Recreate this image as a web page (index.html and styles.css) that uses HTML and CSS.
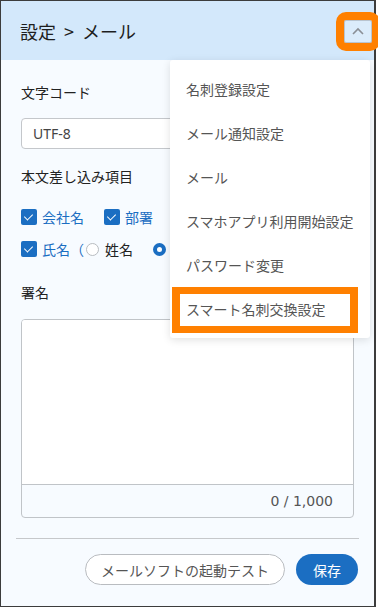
FILE: index.html
```html
<!DOCTYPE html>
<html lang="ja">
<head>
    <meta charset="UTF-8">
    <meta name="viewport" content="width=device-width, initial-scale=1.0">
    <title>設定 - メール</title>
    <link rel="stylesheet" href="styles.css">
</head>
<body>
    <div class="panel">
        <div class="header">
            <h1>設定 &gt; メール</h1>
            <button class="toggle" type="button">
                <svg width="12" height="8" viewBox="0 0 12 8"><polyline points="1,7 6,2 11,7" fill="none" stroke="#8a8f96" stroke-width="1.6"/></svg>
            </button>
        </div>

        <div class="content">
            <div class="label first">文字コード</div>
            <div class="select">UTF-8</div>

            <div class="label second">本文差し込み項目</div>
            <div class="checks row1">
                <span class="check"><span class="box"></span>会社名</span>
                <span class="check"><span class="box"></span>部署</span>
            </div>
            <div class="checks row2">
                <span class="check"><span class="box"></span>氏名（</span>
                <span class="radio"><span class="dot"></span>姓名</span>
                <span class="radio"><span class="dot on"></span></span>
            </div>

            <div class="label third">署名</div>
            <div class="textarea">
                <div class="text"></div>
                <div class="counter">0 / 1,000</div>
            </div>
        </div>

        <div class="footer">
            <button class="btn outline" type="button">メールソフトの起動テスト</button>
            <button class="btn primary" type="button">保存</button>
        </div>

        <!-- ドロップダウンメニュー -->
        <div class="menu">
            <a href="#">名刺登録設定</a>
            <a href="#">メール通知設定</a>
            <a href="#">メール</a>
            <a href="#">スマホアプリ利用開始設定</a>
            <a href="#">パスワード変更</a>
            <a href="#" class="active">スマート名刺交換設定</a>
        </div>
    </div>
</body>
</html>
```

FILE: styles.css
```css
body {
    margin: 0;
    background-color: white;
    font-family: "Noto Sans CJK JP", "Noto Sans", sans-serif;
    color: #222;
}

.panel {
    position: relative;
    width: 376px;
    height: 607px;
    box-sizing: border-box;
    border: 1px solid #3c3c3c;
    border-right-width: 2px;
    background-color: #f7fbff;
}

.header {
    height: 59px;
    background-color: #d3e8fb;
    display: flex;
    align-items: center;
    justify-content: space-between;
    padding: 0 2px 0 19px;
}
.header h1 {
    margin: 0;
    font-size: 18px;
    font-weight: normal;
    word-spacing: 4px;
    color: #1e1e1e;
}

.toggle {
    width: 28px;
    height: 23px;
    margin-top: 1px;
    padding: 0;
    border: 1px solid #b9c4cf;
    border-radius: 2px;
    background-color: #dbecfb;
    display: flex;
    align-items: center;
    justify-content: center;
    outline: 8px solid #ff8000;
}

.content {
    padding: 0 20px;
}

.label {
    font-size: 14px;
    line-height: 20px;
}
.label.first { padding-top: 22px; }
.label.second { margin-top: 17px; }
.label.third { margin-top: 23px; }

.select {
    margin-top: 16px;
    height: 31px;
    box-sizing: border-box;
    border: 1px solid #c4c7cb;
    border-radius: 4px;
    background-color: white;
    padding-left: 11px;
    font-family: "Noto Sans", sans-serif;
    font-size: 14px;
    line-height: 29px;
    color: #444;
}

.checks {
    display: flex;
    align-items: center;
    height: 20px;
    font-size: 14px;
}
.checks.row1 { margin-top: 21px; }
.checks.row2 { margin-top: 12px; }

.check {
    display: flex;
    align-items: center;
    color: #1b6ec2;
    margin-right: 20px;
}
.row2 .check { margin-right: 2px; }
.check .box {
    width: 16px;
    height: 16px;
    border-radius: 2px;
    background-color: #1b6ec2;
    margin-right: 5px;
    position: relative;
}
.check .box::after {
    content: "";
    position: absolute;
    left: 5px;
    top: 3px;
    width: 4px;
    height: 7px;
    border: solid white;
    border-width: 0 1.5px 1.5px 0;
    transform: rotate(45deg);
}

.radio {
    display: flex;
    align-items: center;
    margin-right: 20px;
}
.radio .dot {
    width: 13px;
    height: 13px;
    box-sizing: border-box;
    border: 1px solid #b8bcc0;
    border-radius: 50%;
    background-color: white;
    margin-right: 6px;
}
.radio .dot.on {
    border: 4px solid #1b6ec2;
}

.textarea {
    margin-top: 17px;
    border: 1px solid #c0c4c8;
    border-radius: 4px;
    overflow: hidden;
}
.textarea .text {
    height: 164px;
    background-color: white;
    border-bottom: 1px solid #c0c4c8;
}
.textarea .counter {
    height: 32px;
    line-height: 32px;
    text-align: right;
    padding-right: 20px;
    font-family: "DejaVu Sans", sans-serif;
    font-size: 14px;
    color: #555;
}

.footer {
    margin: 20px 15px 0;
    padding-top: 15px;
    border-top: 1px solid #c6c8cb;
    display: flex;
    justify-content: flex-end;
    gap: 11px;
}

.btn {
    height: 31px;
    border-radius: 16px;
    font-family: "Noto Sans CJK JP", sans-serif;
    font-size: 14px;
    padding: 0 15px;
}
.btn.outline {
    width: 200px;
    background-color: white;
    border: 1px solid #b9bcc0;
    color: #555;
}
.btn.primary {
    width: 62px;
    margin-right: 1px;
    background-color: #1b6ec2;
    border: none;
    color: white;
}

.menu {
    position: absolute;
    left: 169px;
    top: 59px;
    width: 200px;
    padding: 7px 0 5px;
    background-color: white;
    border-radius: 3px;
    box-shadow: 0 2px 8px rgba(0, 0, 0, 0.12);
}
.menu a {
    display: block;
    height: 44px;
    line-height: 44px;
    padding-left: 16px;
    font-size: 14px;
    color: #555;
    text-decoration: none;
}
.menu a.active {
    height: 46px;
    line-height: 30px;
    box-sizing: border-box;
    margin: 0 12px 0 2px;
    padding-left: 6px;
    border: 8px solid #ff8000;
    border-top-width: 7px;
    border-bottom-width: 7px;
}
```
